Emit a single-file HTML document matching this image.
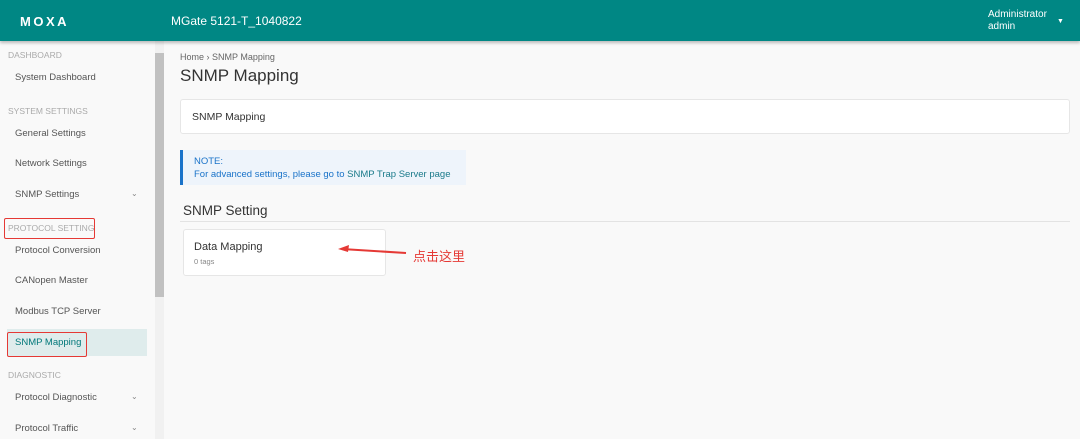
<!DOCTYPE html><html><head><meta charset="utf-8"><style>
*{margin:0;padding:0;box-sizing:border-box}
body{width:1080px;height:439px;overflow:hidden;background:#f9f9f9;font-family:"Liberation Sans","Noto Sans CJK SC",sans-serif;position:relative}
.hdr{position:absolute;left:0;top:0;width:1080px;height:41px;background:#008784;box-shadow:0 2px 3px rgba(0,0,0,.25);color:#fff;z-index:2}
.logo{position:absolute;left:20px;top:14px;font-size:13px;font-weight:bold;letter-spacing:2.5px}
.ttl{position:absolute;left:171px;top:14px;font-size:12px}
.usr{position:absolute;left:988px;top:9px;font-size:10px;line-height:12px}
.car{position:absolute;left:1057px;top:18px;font-size:7px}
.side{position:absolute;left:0;top:41px;width:155px;height:398px;background:#f9f9f9}
.sb{position:absolute;left:155px;top:41px;width:9px;height:398px;background:#f1f1f1}
.th{position:absolute;left:155px;top:53px;width:9px;height:244px;background:#c1c1c1}
.sec{position:absolute;left:8px;font-size:8.5px;color:#aaa}
.it{position:absolute;left:15px;font-size:9.5px;color:#555}
.chev{position:absolute;left:131px;font-size:8px;color:#888}
.act{position:absolute;left:7px;top:329px;width:140px;height:27px;background:#dfecec}
.red{position:absolute;border:1.5px solid #e53935;border-radius:2px}
.crumb{position:absolute;left:180px;top:52px;font-size:9px;color:#666}
.h1{position:absolute;left:180px;top:66px;font-size:17px;color:#333}
.card{position:absolute;background:#fff;border:1px solid #e6e6e6;border-radius:3px}
.note{position:absolute;left:180px;top:150px;width:286px;height:35px;background:#eef4fb;border-left:3px solid #1a73c9;font-size:9.5px;color:#1a73c9;padding:5px 0 0 11px;line-height:13px}
.h2{position:absolute;left:183px;top:203px;font-size:13.5px;color:#333}
.hr{position:absolute;left:180px;top:221px;width:890px;height:1px;background:#e3e3e3}
</style></head><body>
<div class="hdr"><div class="logo">MOXA</div><div class="ttl">MGate 5121-T_1040822</div><div class="usr">Administrator<br>admin</div><div class="car">▼</div></div>
<div class="side"></div>
<div class="act"></div>
<div class="sec" style="top:50px">DASHBOARD</div>
<div class="it" style="top:72px">System Dashboard</div>
<div class="sec" style="top:106px">SYSTEM SETTINGS</div>
<div class="it" style="top:128px">General Settings</div>
<div class="it" style="top:158px">Network Settings</div>
<div class="it" style="top:189px">SNMP Settings</div><div class="chev" style="top:189px">⌄</div>
<div class="sec" style="top:223px">PROTOCOL SETTING</div>
<div class="red" style="left:4px;top:218px;width:91px;height:21px"></div>
<div class="it" style="top:245px">Protocol Conversion</div>
<div class="it" style="top:275px">CANopen Master</div>
<div class="it" style="top:306px">Modbus TCP Server</div>
<div class="it" style="top:337px;color:#00787a">SNMP Mapping</div>
<div class="red" style="left:7px;top:332px;width:80px;height:25px"></div>
<div class="sec" style="top:370px">DIAGNOSTIC</div>
<div class="it" style="top:392px">Protocol Diagnostic</div><div class="chev" style="top:392px">⌄</div>
<div class="it" style="top:423px">Protocol Traffic</div><div class="chev" style="top:423px">⌄</div>
<div class="sb"></div><div class="th"></div>
<div class="crumb">Home › SNMP Mapping</div>
<div class="h1">SNMP Mapping</div>
<div class="card" style="left:180px;top:99px;width:890px;height:35px"><div style="position:absolute;left:11px;top:11px;font-size:10.5px;color:#333">SNMP Mapping</div></div>
<div class="note">NOTE:<br>For advanced settings, please go to <span style="color:#1a7a8a">SNMP Trap Server page</span></div>
<div class="h2">SNMP Setting</div>
<div class="hr"></div>
<div class="card" style="left:183px;top:229px;width:203px;height:47px"><div style="position:absolute;left:10px;top:11px;font-size:11px;color:#333">Data Mapping</div><div style="position:absolute;left:10px;top:27px;font-size:7.5px;color:#888">0 tags</div></div>
<svg style="position:absolute;left:336px;top:242px" width="72" height="16"><line x1="6" y1="7" x2="70" y2="11" stroke="#e53935" stroke-width="2"/><polygon points="2,7 13,3 12,10" fill="#e53935"/></svg>
<div style="position:absolute;left:413px;top:246px;font-size:13px;color:#e53935">点击这里</div>
</body></html>
